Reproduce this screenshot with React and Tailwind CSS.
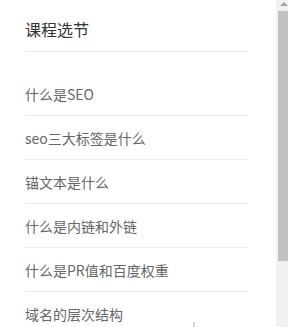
import React from "react";

const lessons = [
  "什么是SEO",
  "seo三大标签是什么",
  "锚文本是什么",
  "什么是内链和外链",
  "什么是PR值和百度权重",
  "域名的层次结构",
];

const App = () => {
  return (
    <div
      className="relative flex h-[327px] w-[288px] overflow-hidden bg-white"
      style={{ fontFamily: '"Noto Sans CJK SC", "Noto Sans", sans-serif' }}
    >
      <div className="flex-1 pl-[25px] pr-[30px]">
        {/* header */}
        <div className="h-[52px] border-b border-[#ebebeb] pt-[21px]">
          <span className="block text-[16px] leading-none text-[#333]">课程选节</span>
        </div>
        <ul className="mt-[20px]">
          {lessons.map((item) => (
            <li
              key={item}
              className="flex h-[44px] items-center border-b border-[#ebebeb] pt-[1px] text-[14px] leading-none text-[#666]"
            >
              {item}
            </li>
          ))}
        </ul>
      </div>
      {/* scrollbar */}
      <div className="flex w-[12px] flex-col bg-[#f1f1f1]">
        <div className="flex h-[11px] items-start justify-center pt-[2px] pl-[4px]">
          <div className="h-0 w-0 border-x-[4px] border-b-[4px] border-x-transparent border-b-[#a3a3a3]" />
        </div>
        <div className="ml-[2px] h-[250px] bg-[#c1c1c1]" />
      </div>
      <div className="absolute left-[193px] top-[322px] h-[5px] w-[2px] bg-[#d4d4d4]" />
    </div>
  );
};

export default App;
